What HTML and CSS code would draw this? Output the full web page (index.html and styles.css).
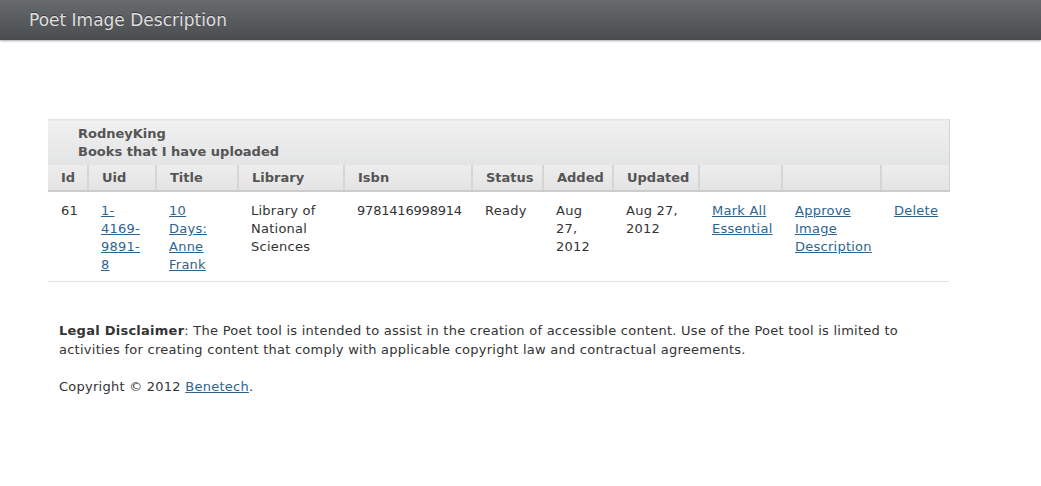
FILE: index.html
```html
<!DOCTYPE html>
<html>
<head>
<meta charset="utf-8">
<title>Poet Image Description</title>
<link rel="stylesheet" href="styles.css">
</head>
<body>
<header class="topbar">
  <span class="brand">Poet Image Description</span>
</header>
<main class="content">
  <table class="books">
    <colgroup>
      <col class="c-id"><col class="c-uid"><col class="c-title"><col class="c-lib"><col class="c-isbn"><col class="c-status"><col class="c-added"><col class="c-updated"><col class="c-mark"><col class="c-approve"><col class="c-del">
    </colgroup>
    <thead>
      <tr class="caption-row">
        <th colspan="11" class="caption">RodneyKing<br>Books that I have uploaded</th>
      </tr>
      <tr class="head-row">
        <th>Id</th><th>Uid</th><th>Title</th><th>Library</th><th>Isbn</th><th>Status</th><th>Added</th><th>Updated</th><th></th><th></th><th class="last"></th>
      </tr>
    </thead>
    <tbody>
      <tr>
        <td>61</td>
        <td><a href="#">1-4169-9891-8</a></td>
        <td><a href="#">10 Days: Anne Frank</a></td>
        <td>Library of National Sciences</td>
        <td class="num">9781416998914</td>
        <td>Ready</td>
        <td>Aug 27, 2012</td>
        <td>Aug 27, 2012</td>
        <td><a href="#">Mark All Essential</a></td>
        <td><a href="#">Approve Image Description</a></td>
        <td><a href="#">Delete</a></td>
      </tr>
    </tbody>
  </table>
  <footer class="legal">
    <p><strong>Legal Disclaimer</strong>: The Poet tool is intended to assist in the creation of accessible content. Use of the Poet tool is limited to activities for creating content that comply with applicable copyright law and contractual agreements.</p>
    <p>Copyright © 2012 <a href="#">Benetech</a>.</p>
  </footer>
</main>
</body>
</html>
```
FILE: styles.css
```css
html, body {
  margin: 0;
  padding: 0;
  background: #ffffff;
}
body {
  font-family: "DejaVu Sans", Verdana, sans-serif;
  font-size: 13px;
  line-height: 18px;
  color: #333333;
}
.topbar {
  height: 40px;
  background: linear-gradient(#686b6e, #4a4d50);
  box-shadow: 0 1px 2px rgba(0,0,0,0.35);
  display: flex;
  align-items: center;
  padding-left: 29px;
}
.brand {
  color: #dedede;
  font-size: 17px;
  text-shadow: 0 -1px 0 rgba(0,0,0,0.4);
  margin-top: -1px;
}
.content {
  width: 901px;
  margin: 79px 0 0 48px;
}
.books {
  width: 901px;
  border-collapse: collapse;
  table-layout: fixed;
}
.c-id { width: 40px; }
.c-uid { width: 68px; }
.c-title { width: 82px; }
.c-lib { width: 106px; }
.c-isbn { width: 128px; }
.c-status { width: 71px; }
.c-added { width: 70px; }
.c-updated { width: 86px; }
.c-mark { width: 83px; }
.c-approve { width: 99px; }
.c-del { width: 68px; }
.caption-row th {
  background: linear-gradient(#f0f0f0, #e3e4e5);
  text-align: left;
  font-weight: bold;
  color: #555555;
  padding: 5px 0 4px 30px;
  border-top: 1px solid #e4e4e4;
  border-right: 1px solid #d4d4d4;
}
.head-row th {
  background: linear-gradient(#ededed, #e4e4e4);
  text-align: left;
  font-weight: bold;
  color: #555555;
  height: 25px;
  padding: 0 0 0 13px;
  border-left: 2px solid #d6d6d6;
  border-bottom: 2px solid #cccccc;
}
.head-row th:first-child {
  border-left: none;
}
.head-row th.last {
  border-right: 1px solid #d4d4d4;
}
.books td {
  vertical-align: top;
  padding: 10px 13px 7px 13px;
  border-bottom: 1px solid #e2e2e2;
  letter-spacing: 0.25px;
}
.books td.num {
  letter-spacing: -0.2px;
}
a {
  color: #2d6590;
  text-decoration: underline;
}
.legal {
  padding: 39px 11px 0 11px;
  line-height: 19px;
  letter-spacing: 0.25px;
}
.legal p {
  margin: 0 0 18px 0;
}
.legal strong {
  color: #333333;
}
```
